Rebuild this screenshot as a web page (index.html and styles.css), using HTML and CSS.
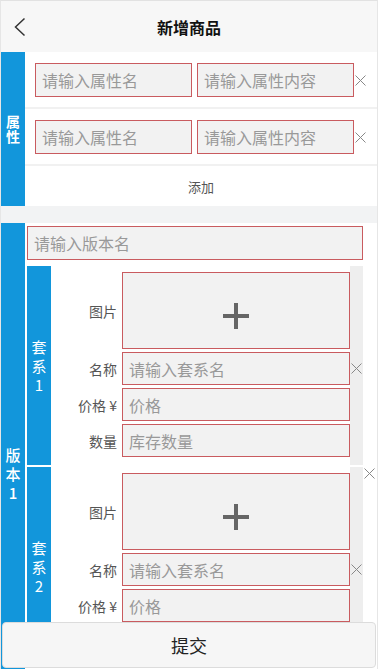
FILE: index.html
```html
<!DOCTYPE html>
<html lang="zh-CN">
<head>
<meta charset="utf-8">
<meta name="viewport" content="width=device-width, initial-scale=1">
<title>新增商品</title>
<link rel="stylesheet" href="styles.css">
</head>
<body>
<div class="page">
  <header class="topbar">
    <a class="back" href="#" aria-label="返回">
      <svg width="12" height="20" viewBox="0 0 12 20"><polyline points="10.5,1.5 1.5,10 10.5,18.5" fill="none" stroke="#333" stroke-width="1.5"/></svg>
    </a>
    <h1 class="title">新增商品</h1>
    <span class="spacer"></span>
  </header>

  <section class="block attr">
    <div class="side"><span class="side-text tight">属性</span></div>
    <div class="attr-body">
      <div class="attr-row">
        <input class="field attr-field" placeholder="请输入属性名">
        <input class="field attr-field" placeholder="请输入属性内容">
        <span class="close"><svg width="11" height="11" viewBox="0 0 11 11"><path d="M0.5 0.5L10.5 10.5M10.5 0.5L0.5 10.5" stroke="#888" stroke-width="1"/></svg></span>
      </div>
      <div class="attr-row">
        <input class="field attr-field" placeholder="请输入属性名">
        <input class="field attr-field" placeholder="请输入属性内容">
        <span class="close"><svg width="11" height="11" viewBox="0 0 11 11"><path d="M0.5 0.5L10.5 10.5M10.5 0.5L0.5 10.5" stroke="#888" stroke-width="1"/></svg></span>
      </div>
      <div class="add-row">添加</div>
    </div>
  </section>

  <section class="block version">
    <div class="side"><span class="side-text bold">版本1</span></div>
    <div class="version-body">
      <input class="field version-name" placeholder="请输入版本名">
      <div class="suite-list">
        <div class="suite">
          <div class="suite-bar"><span class="side-text">套系1</span></div>
          <div class="suite-form">
            <span class="label">图片</span>
            <div class="pic"><svg width="26" height="26" viewBox="0 0 26 26"><path d="M13 0V26M0 13H26" stroke="#666" stroke-width="4"/></svg></div>
            <span></span>
            <span class="label">名称</span>
            <input class="field suite-field" placeholder="请输入套系名">
            <span class="close cell"><svg width="11" height="11" viewBox="0 0 11 11"><path d="M0.5 0.5L10.5 10.5M10.5 0.5L0.5 10.5" stroke="#888" stroke-width="1"/></svg></span>
            <span class="label">价格 ¥</span>
            <input class="field suite-field" placeholder="价格">
            <span></span>
            <span class="label">数量</span>
            <input class="field suite-field" placeholder="库存数量">
            <span></span>
          </div>
        </div>
        <div class="suite">
          <span class="close suite-del"><svg width="11" height="11" viewBox="0 0 11 11"><path d="M0.5 0.5L10.5 10.5M10.5 0.5L0.5 10.5" stroke="#888" stroke-width="1"/></svg></span>
          <div class="suite-bar"><span class="side-text">套系2</span></div>
          <div class="suite-form">
            <span class="label">图片</span>
            <div class="pic"><svg width="26" height="26" viewBox="0 0 26 26"><path d="M13 0V26M0 13H26" stroke="#666" stroke-width="4"/></svg></div>
            <span></span>
            <span class="label">名称</span>
            <input class="field suite-field" placeholder="请输入套系名">
            <span class="close cell"><svg width="11" height="11" viewBox="0 0 11 11"><path d="M0.5 0.5L10.5 10.5M10.5 0.5L0.5 10.5" stroke="#888" stroke-width="1"/></svg></span>
            <span class="label">价格 ¥</span>
            <input class="field suite-field" placeholder="价格">
            <span></span>
            <span class="label">数量</span>
            <input class="field suite-field" placeholder="库存数量">
            <span></span>
          </div>
        </div>
      </div>
    </div>
  </section>

  <div class="submit-bar"><button class="submit" type="button">提交</button></div>
</div>
</body>
</html>
```

FILE: styles.css
```css
* { box-sizing: border-box; }
html, body { margin: 0; padding: 0; }
body {
  font-family: "Noto Sans CJK SC", "Noto Sans", sans-serif;
  background: #f2f3f4;
  color: #333;
}
.page {
  width: 378px;
  min-height: 669px;
  border-left: 1px solid #e6e6e6;
  border-right: 1px solid #e6e6e6;
  border-top: 1px solid #e2e2e2;
  padding-bottom: 60px;
}
.topbar {
  height: 51px;
  background: #f7f7f7;
  display: grid;
  grid-template-columns: 40px 1fr 40px;
  align-items: center;
}
.back { display: flex; padding-left: 13px; padding-top: 1px; }
.title {
  margin: 0;
  text-align: center;
  font-size: 16px;
  font-weight: bold;
  color: #111;
  line-height: 1;
}
.block { display: flex; background: #fff; }
.side {
  width: 24px;
  flex: none;
  background: #1296db;
  display: flex;
  align-items: center;
  justify-content: center;
}
.side-text {
  width: 16px;
  color: #fff;
  font-size: 15px;
  line-height: 19px;
  text-align: center;
  word-break: break-all;
}
.side-text.tight { font-size: 14px; line-height: 15px; font-weight: bold; }
.side-text.bold { font-weight: 500; }

.attr-body {
  flex: 1;
  display: flex;
  flex-direction: column;
  gap: 2px;
  background: #f1f1f1;
}
.attr-row {
  background: #fff;
  display: flex;
  align-items: center;
  padding: 11px 0 10px 10px;
}
.field {
  height: 34px;
  border: 1px solid #c95b5f;
  background: #f2f2f2;
  padding: 0 6px;
  font-family: inherit;
  font-size: 16px;
  color: #333;
  outline: none;
  border-radius: 0;
  margin: 0;
}
.field::placeholder { color: #999; }
.attr-field { width: 157px; }
.attr-field + .attr-field { margin-left: 5px; }
.close { display: flex; width: 11px; height: 11px; }
.attr-row .close { margin-left: 1px; }
.add-row {
  background: #fff;
  height: 40px;
  display: flex;
  align-items: center;
  justify-content: center;
  font-size: 13px;
  color: #555;
}

.version { margin-top: 17px; }
.version-body {
  flex: 1;
  padding: 3px 13px 57px 2px;
}
.version-name { width: 336px; display: block; }
.suite-list {
  margin-top: 6px;
  display: flex;
  flex-direction: column;
  gap: 2px;
}
.suite { display: flex; position: relative; }
.suite-bar {
  width: 24px;
  flex: none;
  background: #1296db;
  display: flex;
  align-items: center;
  justify-content: center;
}
.suite-form {
  width: 312px;
  background: linear-gradient(to right, #fff 299px, #eeeeee 299px);
  padding: 6px 0 8px;
  display: grid;
  grid-template-columns: 71px 228px 13px;
  row-gap: 3px;
  align-items: center;
}
.label {
  text-align: right;
  padding-right: 5px;
  font-size: 14px;
  color: #555;
  white-space: nowrap;
}
.pic {
  height: 77px;
  border: 1px solid #c95b5f;
  background: #f2f2f2;
  display: flex;
  align-items: center;
  justify-content: center;
  padding-top: 10px;
}
.suite-field { width: 228px; height: 33px; }
.close.cell { justify-self: center; }
.suite-del { position: absolute; left: 100%; top: 1px; }

.submit-bar {
  position: fixed;
  left: 2px;
  right: 2px;
  bottom: 1px;
  height: 46px;
}
.submit {
  width: 100%;
  height: 100%;
  background: #f6f6f6;
  border: 1px solid #dcdcdc;
  border-radius: 4px;
  font-family: inherit;
  font-size: 18px;
  color: #222;
  padding: 0;
}
```
